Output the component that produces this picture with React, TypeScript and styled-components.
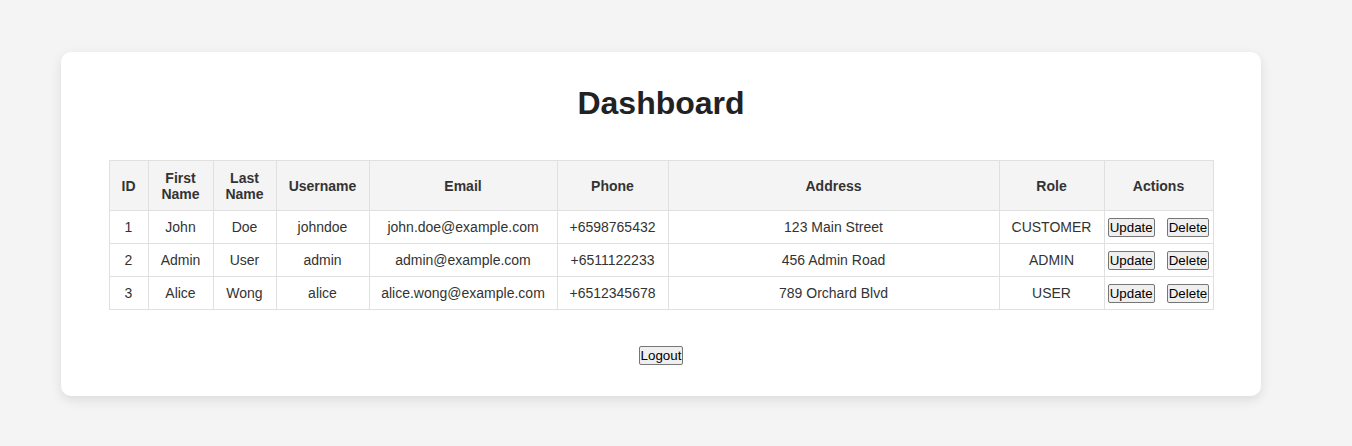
import React from "react";
import styled, { createGlobalStyle } from "styled-components";

const GlobalStyle = createGlobalStyle`
  html, body {
    margin: 0;
    padding: 0;
    background: #f4f4f4;
    font-family: "Liberation Sans", Arial, sans-serif;
    color: #333;
  }
  * { box-sizing: border-box; }
`;

const Page = styled.div`
  padding: 52px 0 50px 61px;
`;

const Card = styled.div`
  width: 1200px;
  background: #fff;
  border-radius: 10px;
  box-shadow: 0 4px 12px rgba(0, 0, 0, 0.1);
  padding: 33px 48px 31px;
  display: flex;
  flex-direction: column;
  align-items: center;
`;

const Title = styled.h1`
  margin: 0 0 38px;
  font-size: 32px;
  line-height: 37px;
  font-weight: bold;
  color: #222;
  text-align: center;
`;

const Table = styled.table`
  width: 1104px;
  border-collapse: collapse;
  table-layout: fixed;
  font-size: 14px;
`;

const Th = styled.th`
  background: #f4f4f4;
  border: 1px solid #e0e0e0;
  padding: 8px;
  font-weight: bold;
  line-height: 16px;
  text-align: center;
  color: #333;
  height: 50px;
`;

const Td = styled.td<{ $tight?: boolean }>`
  border: 1px solid #e0e0e0;
  padding: ${(p) => (p.$tight ? "6px 0" : "8px")};
  line-height: 16px;
  text-align: center;
  color: #333;
  height: 32px;
  white-space: nowrap;
`;

const Actions = styled.div`
  display: flex;
  justify-content: center;
  gap: 12px;
`;

const Button = styled.button`
  font-family: "Liberation Sans", Arial, sans-serif;
  font-size: 13.333px;
  line-height: 15px;
  color: #000;
  background: #efefef;
  border: 1px solid #767676;
  border-radius: 2px;
  padding: 1px 1px;
  cursor: pointer;
`;

const Footer = styled.div`
  margin-top: 36px;
  display: flex;
  justify-content: center;
`;

const users = [
  { id: 1, first: "John", last: "Doe", username: "johndoe", email: "john.doe@example.com", phone: "+6598765432", address: "123 Main Street", role: "CUSTOMER" },
  { id: 2, first: "Admin", last: "User", username: "admin", email: "admin@example.com", phone: "+6511122233", address: "456 Admin Road", role: "ADMIN" },
  { id: 3, first: "Alice", last: "Wong", username: "alice", email: "alice.wong@example.com", phone: "+6512345678", address: "789 Orchard Blvd", role: "USER" },
];

const widths = [39, 65, 63, 93, 188, 111, 331, 105, 109];

export default function App() {
  return (
    <>
      <GlobalStyle />
      <Page>
        <Card>
          <Title>Dashboard</Title>
          <Table>
            <colgroup>
              {widths.map((w, i) => (
                <col key={i} style={{ width: w }} />
              ))}
            </colgroup>
            <thead>
              <tr>
                <Th>ID</Th>
                <Th>First Name</Th>
                <Th>Last Name</Th>
                <Th>Username</Th>
                <Th>Email</Th>
                <Th>Phone</Th>
                <Th>Address</Th>
                <Th>Role</Th>
                <Th>Actions</Th>
              </tr>
            </thead>
            <tbody>
              {users.map((u) => (
                <tr key={u.id}>
                  <Td>{u.id}</Td>
                  <Td>{u.first}</Td>
                  <Td>{u.last}</Td>
                  <Td>{u.username}</Td>
                  <Td>{u.email}</Td>
                  <Td>{u.phone}</Td>
                  <Td>{u.address}</Td>
                  <Td>{u.role}</Td>
                  <Td $tight>
                    <Actions>
                      <Button>Update</Button>
                      <Button>Delete</Button>
                    </Actions>
                  </Td>
                </tr>
              ))}
            </tbody>
          </Table>
          <Footer>
            <Button>Logout</Button>
          </Footer>
        </Card>
      </Page>
    </>
  );
}
